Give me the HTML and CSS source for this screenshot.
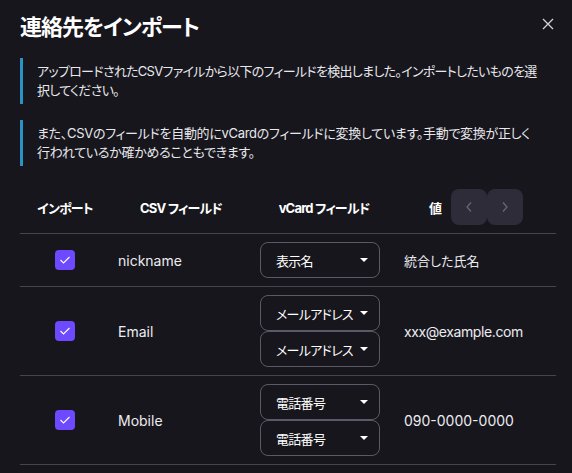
FILE: index.html
```html
<!DOCTYPE html>
<html lang="ja">
  <head>
    <meta charset="UTF-8" />
    <title>連絡先をインポート</title>
    <link rel="stylesheet" href="styles.css">
  </head>
  <body>
    <div class="modal">
      <div class="modal-header">
        <h1>連絡先をインポート</h1>
        <button class="close" aria-label="閉じる">
          <svg width="12" height="12" viewBox="0 0 12 12">
            <path d="M1 1 L11 11 M11 1 L1 11" stroke="#d4d3da" stroke-width="1.3" fill="none" />
          </svg>
        </button>
      </div>

      <p class="note tight">
        アップロードされたCSVファイルから以下のフィールドを検出しました。インポートしたいものを選択してください。
      </p>
      <p class="note">
        また、CSVのフィールドを自動的にvCardのフィールドに変換しています。手動で変換が正しく行われているか確かめることもできます。
      </p>

      <table class="fields">
        <colgroup>
          <col class="c-import" />
          <col class="c-csv" />
          <col class="c-vcard" />
          <col class="c-value" />
        </colgroup>
        <thead>
          <tr>
            <th>インポート</th>
            <th>CSV フィールド</th>
            <th>vCard フィールド</th>
            <th>
              <div class="value-head">
                <span>値</span>
                <div class="pager">
                  <button disabled>
                    <svg width="8" height="12" viewBox="0 0 8 12"><path d="M6 1.5 L2 6 L6 10.5" stroke="#6a6776" stroke-width="1.2" fill="none" /></svg>
                  </button>
                  <button disabled>
                    <svg width="8" height="12" viewBox="0 0 8 12"><path d="M2 1.5 L6 6 L2 10.5" stroke="#6a6776" stroke-width="1.2" fill="none" /></svg>
                  </button>
                </div>
              </div>
            </th>
          </tr>
        </thead>
        <tbody>
          <tr>
            <td class="check"><span class="checkbox"><svg width="12" height="10" viewBox="0 0 12 10"><path d="M1.5 5 L4.5 8 L10.5 2" stroke="#fff" stroke-width="1.1" fill="none" /></svg></span></td>
            <td class="latin">nickname</td>
            <td>
              <div class="select"><span>表示名</span><i class="caret"></i></div>
            </td>
            <td>統合した氏名</td>
          </tr>
          <tr>
            <td class="check"><span class="checkbox"><svg width="12" height="10" viewBox="0 0 12 10"><path d="M1.5 5 L4.5 8 L10.5 2" stroke="#fff" stroke-width="1.1" fill="none" /></svg></span></td>
            <td class="latin">Email</td>
            <td>
              <div class="select"><span>メールアドレス</span><i class="caret"></i></div>
              <div class="select"><span>メールアドレス</span><i class="caret"></i></div>
            </td>
            <td class="latin value">xxx@example.com</td>
          </tr>
          <tr>
            <td class="check"><span class="checkbox"><svg width="12" height="10" viewBox="0 0 12 10"><path d="M1.5 5 L4.5 8 L10.5 2" stroke="#fff" stroke-width="1.1" fill="none" /></svg></span></td>
            <td class="latin">Mobile</td>
            <td>
              <div class="select"><span>電話番号</span><i class="caret"></i></div>
              <div class="select"><span>電話番号</span><i class="caret"></i></div>
            </td>
            <td class="latin">090-0000-0000</td>
          </tr>
        </tbody>
      </table>
    </div>
  </body>
</html>
```

FILE: styles.css
```css
body {
  margin: 0;
  padding: 0;
  background: #17161d;
  color: #ececf0;
  font-family: Inter, "Noto Sans CJK JP", sans-serif;
  font-feature-settings: "palt";
  font-size: 13px;
  overflow: hidden;
}

.modal {
  padding: 12px 16px 0 20px;
}

.modal-header {
  display: flex;
  justify-content: space-between;
  align-items: flex-start;
}

.modal-header h1 {
  margin: 0;
  font-size: 22px;
  line-height: 30px;
  font-weight: 700;
  letter-spacing: -1px;
  color: #ffffff;
}

.close {
  background: none;
  border: none;
  padding: 0;
  margin: 6px 2px 0 0;
  width: 12px;
  height: 12px;
  display: flex;
}

.note {
  margin: 16px 0 0 0;
  padding: 4px 16px 4px 14px;
  border-left: 3px solid #2b93c4;
  line-height: 19px;
  letter-spacing: -0.3px;
  color: #e8e8ec;
}

.note.tight {
  letter-spacing: -0.7px;
}

/* field table */
.fields {
  margin-top: 15px;
  width: 536px;
  border-collapse: collapse;
  table-layout: fixed;
}

.c-import { width: 90px; }
.c-csv { width: 142px; }
.c-vcard { width: 144px; }
.c-value { width: 160px; }

.fields th {
  padding: 8px 8px;
  height: 36px;
  font-weight: 700;
  letter-spacing: -0.8px;
  color: #ffffff;
  text-align: center;
  border-bottom: 1px solid #45434f;
}

.fields td {
  padding: 8px 8px;
  border-bottom: 1px solid #45434f;
  color: #ececf0;
  vertical-align: middle;
}

.fields td.latin {
  font-size: 14px;
}

.fields td.value {
  letter-spacing: -0.4px;
}

.fields td.check {
  text-align: center;
}

.value-head {
  display: flex;
  justify-content: center;
  align-items: center;
  gap: 10px;
}

.pager {
  display: flex;
}

.pager button {
  width: 36px;
  height: 36px;
  border: none;
  border-radius: 8px;
  background: #2e2c38;
  display: flex;
  align-items: center;
  justify-content: center;
  padding: 0;
}

.checkbox {
  display: inline-flex;
  width: 20px;
  height: 20px;
  border-radius: 4px;
  background: #6d4aff;
  align-items: center;
  justify-content: center;
  vertical-align: middle;
}

.select {
  box-sizing: border-box;
  width: 120px;
  height: 36px;
  border: 1px solid #5b5967;
  border-radius: 8px;
  display: flex;
  align-items: center;
  justify-content: space-between;
  padding: 0 11px 0 15px;
  letter-spacing: -0.7px;
  color: #ffffff;
}

.caret {
  width: 0;
  height: 0;
  border-left: 4px solid transparent;
  border-right: 4px solid transparent;
  border-top: 4px solid #ffffff;
}
```
